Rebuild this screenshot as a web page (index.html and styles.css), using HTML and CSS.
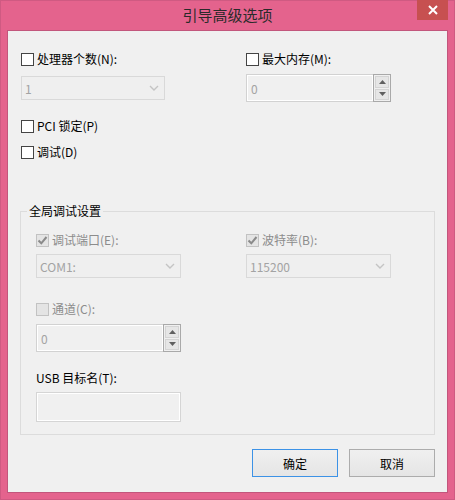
FILE: index.html
```html
<!DOCTYPE html>
<html lang="zh-CN">
<head>
<meta charset="utf-8">
<title>引导高级选项</title>
<link rel="stylesheet" href="styles.css">
</head>
<body>
<div class="window">
  <div class="titlebar">
    <span></span>
    <span class="title">引导高级选项</span>
    <div class="close">
      <svg width="10" height="10" viewBox="0 0 10 10"><path d="M1 1 L9 9 M9 1 L1 9" stroke="#fff" stroke-width="2" fill="none"/></svg>
    </div>
  </div>
  <div class="client">
    <div class="top-grid">
      <div class="row"><span class="chk"></span><span class="lbl">处理器个数(N):</span></div>
      <div class="row"><span class="chk"></span><span class="lbl">最大内存(M):</span></div>
      <div class="combo w144"><span class="val">1</span><svg class="chev" width="10" height="6" viewBox="0 0 10 6"><path d="M1 1 L5 5 L9 1" stroke="#c4c4c4" stroke-width="1.4" fill="none"/></svg></div>
      <div class="spin w145">
        <div class="spin-text"><span class="val">0</span></div>
        <div class="spin-btns">
          <div class="sbtn"><svg width="7" height="4" viewBox="0 0 7 4"><path d="M0 4 L3.5 0 L7 4 Z" fill="#606060"/></svg></div>
          <div class="sbtn"><svg width="7" height="4" viewBox="0 0 7 4"><path d="M0 0 L3.5 4 L7 0 Z" fill="#606060"/></svg></div>
        </div>
      </div>
    </div>
    <div class="row pci"><span class="chk"></span><span class="lbl">PCI 锁定(P)</span></div>
    <div class="row dbg"><span class="chk"></span><span class="lbl">调试(D)</span></div>

    <fieldset class="group">
      <legend>全局调试设置</legend>
      <div class="group-grid">
        <div class="row"><span class="chk dis checked"><svg width="11" height="11" viewBox="0 0 11 11"><path d="M1.5 5.5 L4.3 8.3 L9.5 2" stroke="#8a8a8a" stroke-width="2" fill="none"/></svg></span><span class="lbl dim">调试端口(E):</span></div>
        <div class="row"><span class="chk dis checked"><svg width="11" height="11" viewBox="0 0 11 11"><path d="M1.5 5.5 L4.3 8.3 L9.5 2" stroke="#8a8a8a" stroke-width="2" fill="none"/></svg></span><span class="lbl dim">波特率(B):</span></div>
        <div class="combo w145"><span class="val">COM1:</span><svg class="chev" width="10" height="6" viewBox="0 0 10 6"><path d="M1 1 L5 5 L9 1" stroke="#c4c4c4" stroke-width="1.4" fill="none"/></svg></div>
        <div class="combo w145"><span class="val">115200</span><svg class="chev" width="10" height="6" viewBox="0 0 10 6"><path d="M1 1 L5 5 L9 1" stroke="#c4c4c4" stroke-width="1.4" fill="none"/></svg></div>
      </div>
      <div class="row chan"><span class="chk dis"></span><span class="lbl dim">通道(C):</span></div>
      <div class="spin w145 chan-spin">
        <div class="spin-text"><span class="val">0</span></div>
        <div class="spin-btns">
          <div class="sbtn"><svg width="7" height="4" viewBox="0 0 7 4"><path d="M0 4 L3.5 0 L7 4 Z" fill="#606060"/></svg></div>
          <div class="sbtn"><svg width="7" height="4" viewBox="0 0 7 4"><path d="M0 0 L3.5 4 L7 0 Z" fill="#606060"/></svg></div>
        </div>
      </div>
      <div class="row usb"><span class="lbl">USB 目标名(T):</span></div>
      <div class="textbox"></div>
    </fieldset>

    <div class="buttons">
      <div class="btn default">确定</div>
      <div class="btn">取消</div>
    </div>
  </div>
</div>
</body>
</html>
```

FILE: styles.css
```css
* { box-sizing: border-box; }
html, body { margin: 0; padding: 0; }
body {
  font-family: "Noto Sans CJK SC", "Noto Sans", sans-serif;
  font-size: 12px;
  color: #000;
  background: #e4638d;
}
.window {
  width: 455px;
  height: 500px;
  background: #e4638d;
  border: 1px solid #cf5a82;
  padding: 0 6px 6px 6px;
  display: flex;
  flex-direction: column;
}
.titlebar {
  height: 29px;
  display: grid;
  grid-template-columns: 1fr auto 1fr;
  align-items: start;
}
.title {
  font-size: 15px;
  line-height: 20px;
  padding-top: 4px;
  color: #2a2a2a;
}
.close {
  justify-self: end;
  width: 31px;
  height: 20px;
  margin-top: -1px;
  background: #c75050;
  display: flex;
  align-items: center;
  justify-content: center;
}
.client {
  flex: 1;
  background: #f0f0f0;
  border: 1px solid #c2567c;
  padding: 20px 12px 0 12px;
  display: flex;
  flex-direction: column;
}
.top-grid {
  display: grid;
  grid-template-columns: 225px 145px;
  grid-template-rows: 16px 28px;
  row-gap: 7px;
  padding-left: 1px;
  align-items: center;
}
.row {
  display: flex;
  align-items: center;
  height: 16px;
  line-height: 16px;
}
.pci { margin-top: 16px; padding-left: 1px; }
.dbg { margin-top: 10px; padding-left: 1px; }
.chk {
  width: 13px;
  height: 13px;
  border: 1px solid #444;
  background: #fff;
  flex: none;
  display: flex;
  align-items: center;
  justify-content: center;
}
.chk.dis {
  border-color: #c2c2c2;
  background: #e4e4e4;
}
.lbl { margin-left: 3px; white-space: nowrap; }
.lbl.dim { color: #8c8c8c; }
.val { color: #a3a3a3; }
.w144 { width: 144px; }
.w145 { width: 145px; }
.combo {
  height: 24px;
  border: 1px solid #d9d9d9;
  background: #efefef;
  display: flex;
  align-items: center;
  justify-content: space-between;
  padding: 0 5px 0 3px;
}
.chev { flex: none; }
.spin {
  height: 28px;
  display: flex;
}
.spin-text {
  flex: 1;
  border: 1px solid #d2d2d2;
  border-right: none;
  box-shadow: inset 1px 1px 0 #fff, inset -1px -1px 0 #fff;
  background: #f0f0f0;
  display: flex;
  align-items: center;
  padding-left: 4px;
}
.spin-btns {
  width: 18px;
  border: 1px solid #a9a9a9;
  padding: 1px;
  display: flex;
  flex-direction: column;
  gap: 1px;
  background: #f0f0f0;
}
.sbtn {
  flex: 1;
  background: #e6e6e6;
  border: 1px solid #d4d4d4;
  display: flex;
  align-items: center;
  justify-content: center;
}
.group {
  margin: 43px 0 0 0;
  width: 415px;
  border: 1px solid #dcdcdc;
  padding: 13px 0 12px 15px;
  min-width: 0;
}
.group legend {
  margin-left: -9px;
  padding: 0 2px;
  line-height: 16px;
  height: 16px;
}
.group-grid {
  display: grid;
  grid-template-columns: 210px 145px;
  grid-template-rows: 16px 24px;
  row-gap: 6px;
}
.chan { margin-top: 23px; }
.chan-spin { margin-top: 7px; }
.usb { margin-top: 18px; }
.usb .lbl { margin-left: 0; }
.textbox {
  margin-top: 6px;
  width: 145px;
  height: 30px;
  border: 1px solid #d5d5d5;
  box-shadow: inset 0 0 0 1px #fff;
  background: #f0f0f0;
}
.buttons {
  margin-top: 14px;
  display: flex;
  justify-content: flex-end;
  gap: 11px;
}
.btn {
  width: 86px;
  height: 28px;
  border: 1px solid #acacac;
  background: linear-gradient(#f0f0f0, #e5e5e5);
  display: flex;
  align-items: center;
  justify-content: center;
}
.btn.default { border-color: #3c92e6; }
```
